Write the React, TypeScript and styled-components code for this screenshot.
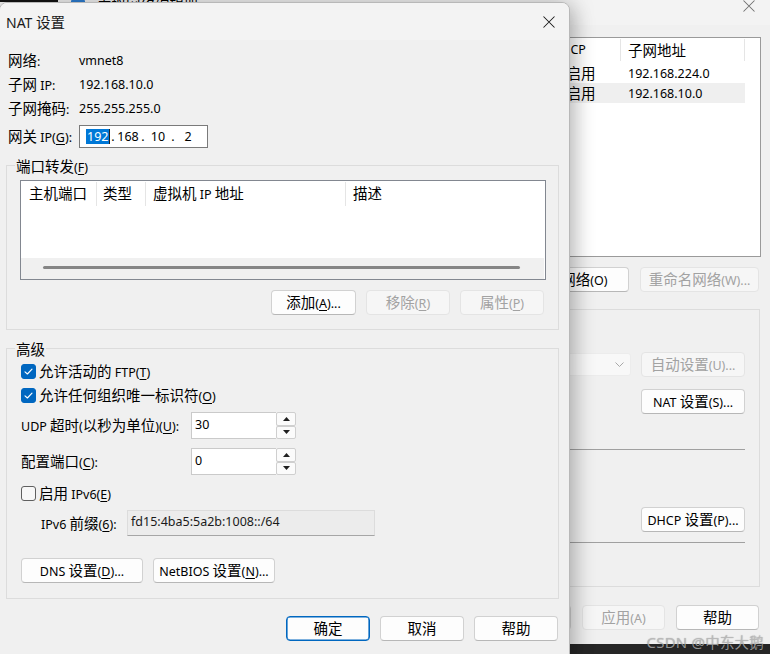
import React from 'react';
import styled, { createGlobalStyle } from 'styled-components';

const GlobalStyle = createGlobalStyle`
  html, body { margin: 0; padding: 0; }
  body {
    width: 770px; height: 654px; overflow: hidden; background: #262626;
    font-family: "Noto Sans", "Noto Sans CJK SC", sans-serif; font-size: 12.5px; line-height: 17px; color: #000;
  }
  #root { width: 770px; height: 654px; }
`;

/* ---------- text helpers ---------- */
const Han = styled.span`
  font-family: "Noto Sans CJK SC", sans-serif;
  font-size: 14.5px;
`;
const Key = styled.span`
  text-decoration: underline;
  text-underline-offset: 2px;
  text-decoration-thickness: 1px;
`;
const HAN_SPLIT = /([\u2e80-\u9fff\uf900-\ufaff\uff00-\uffef\u3000-\u303f]+)/;
const HAN_TEST = /^[\u2e80-\u9fff\uf900-\ufaff\uff00-\uffef\u3000-\u303f]+$/;

function T({ s }: { s: string }) {
  const out: React.ReactNode[] = [];
  s.split(/(&.)/).forEach((seg, i) => {
    if (seg.length === 2 && seg[0] === '&') {
      out.push(<Key key={`k${i}`}>{seg[1]}</Key>);
      return;
    }
    seg.split(HAN_SPLIT).forEach((p, j) => {
      if (!p) return;
      out.push(
        HAN_TEST.test(p) ? <Han key={`${i}-${j}`}>{p}</Han> : <React.Fragment key={`${i}-${j}`}>{p}</React.Fragment>
      );
    });
  });
  return <>{out}</>;
}

/* ---------- icons ---------- */
const CloseIcon = () => (
  <svg width="12" height="12" viewBox="0 0 12 12">
    <path d="M0.5 0.5 L11.5 11.5 M11.5 0.5 L0.5 11.5" stroke="#1a1a1a" strokeWidth="1.05" fill="none" />
  </svg>
);
const CheckMark = () => (
  <svg width="15" height="15" viewBox="0 0 15 15">
    <path d="M4 7.8 L6.4 10 L11 5.2" stroke="#fff" strokeWidth="1.15" fill="none" strokeLinecap="round" strokeLinejoin="round" />
  </svg>
);
const ArrowUp = () => (
  <svg width="7" height="4" viewBox="0 0 7 4">
    <polygon points="3.5,0 7,4 0,4" fill="#1f1f1f" />
  </svg>
);
const ArrowDown = () => (
  <svg width="7" height="4" viewBox="0 0 7 4">
    <polygon points="0,0 7,0 3.5,4" fill="#1f1f1f" />
  </svg>
);
const Chevron = () => (
  <svg width="9" height="5" viewBox="0 0 9 5">
    <polyline points="0.5,0.5 4.5,4.5 8.5,0.5" stroke="#a8a8a8" strokeWidth="1" fill="none" />
  </svg>
);
const NetIcon = () => (
  <svg width="16" height="16" viewBox="0 0 16 16">
    <rect x="1" y="2" width="14" height="9" rx="1" fill="#2d7fd3" />
    <rect x="3" y="4" width="10" height="5" fill="#9fd0ff" />
    <rect x="6" y="12" width="4" height="2" fill="#2d7fd3" />
  </svg>
);

/* ---------- desktop ---------- */
const Desktop = styled.div`
  position: relative;
  width: 770px;
  height: 654px;
  overflow: hidden;
  background: #262626;
`;
const TopStrip = styled.div`
  position: absolute;
  left: 0;
  top: 0;
  width: 58px;
  height: 2px;
  background: #111;
  z-index: 3;
`;
const Watermark = styled.div`
  position: absolute;
  right: 6px;
  bottom: 2px;
  z-index: 5;
  font-family: "Noto Sans", "Noto Sans CJK SC", sans-serif;
  font-size: 15px;
  line-height: 20px;
  color: rgba(190, 190, 190, 0.75);
  text-shadow: 0 0 1px rgba(0, 0, 0, 0.35);
  letter-spacing: 0.2px;
  white-space: nowrap;
`;

/* ---------- buttons ---------- */
const Btn = styled.button<{ $w?: number; $primary?: boolean }>`
  box-sizing: border-box;
  flex: none;
  width: ${(p) => p.$w ?? 84}px;
  height: 25px;
  margin: 0;
  padding: 0;
  font: inherit;
  line-height: 22px;
  text-align: center;
  color: #000;
  background: #fdfdfd;
  border: 1px solid ${(p) => (p.$primary ? '#0067c0' : '#d1d1d1')};
  border-bottom-color: ${(p) => (p.$primary ? '#0067c0' : '#b7b7b7')};
  box-shadow: ${(p) => (p.$primary ? 'inset 0 0 0 0.6px #0067c0' : 'none')};
  border-radius: 4px;
  display: inline-block;
  white-space: nowrap;
  overflow: hidden;
  &:disabled {
    color: #a2a2a2;
    background: #f6f6f6;
    border-color: #e4e4e4;
  }
`;

/* ---------- background window (Virtual Network Editor) ---------- */
const BgWindow = styled.div`
  position: absolute;
  left: 0;
  top: -14px;
  width: 770px;
  height: 658px;
  background: #f0f0f0;
  display: flex;
  flex-direction: column;
  z-index: 1;
`;
const BgTitleBar = styled.div`
  flex: none;
  height: 39px;
  background: #f3f3f3;
  display: flex;
  align-items: center;
  padding-left: 70px;
  gap: 11px;
`;
const BgTitleText = styled.div`
  flex: 1;
  white-space: nowrap;
`;
const BgClose = styled.div`
  width: 42px;
  height: 39px;
  display: flex;
  align-items: center;
  justify-content: center;
  opacity: 0.6;
`;
const BgBody = styled.div`
  flex: 1;
  display: flex;
  flex-direction: column;
  padding: 12px 9px 0 10px;
`;
const NetList = styled.div`
  box-sizing: border-box;
  height: 220px;
  flex: none;
  border: 1px solid #9a9a9a;
  background: #fff;
`;
const NET_COLS = '90px 80px 200px 164px 76px 124px';
const NetHead = styled.div`
  display: grid;
  grid-template-columns: ${NET_COLS};
  width: 734px;
  height: 25px;
`;
const NetHeadCell = styled.div`
  box-sizing: border-box;
  height: 22px;
  margin-top: 1px;
  padding-left: 7px;
  line-height: 22px;
  border-right: 1px solid #e5e5e5;
  white-space: nowrap;
  overflow: hidden;
`;
const NetRow = styled.div<{ $sel?: boolean }>`
  display: grid;
  grid-template-columns: ${NET_COLS};
  width: 734px;
  height: 20px;
  align-items: center;
  background: ${(p) => (p.$sel ? '#efefef' : 'transparent')};
`;
const NetCell = styled.div`
  padding-left: 7px;
  white-space: nowrap;
  overflow: hidden;
`;
const BgButtonRow = styled.div<{ $mt: number }>`
  display: flex;
  justify-content: flex-end;
  gap: 11px;
  margin-top: ${(p) => p.$mt}px;
  padding-right: 2px;
`;
const InfoGroup = styled.div`
  box-sizing: border-box;
  height: 278px;
  margin-top: 17px;
  margin-right: 1px;
  border: 1px solid #dcdcdc;
  display: flex;
  flex-direction: column;
  padding: 0 14px 0 20px;
`;
const ModeRow = styled.div<{ $mt: number }>`
  display: flex;
  justify-content: flex-end;
  align-items: center;
  gap: 10px;
  margin-top: ${(p) => p.$mt}px;
`;
const DisabledSelect = styled.div`
  box-sizing: border-box;
  width: 220px;
  height: 23px;
  background: #f8f8f8;
  border: 1px solid #ececec;
  border-radius: 3px;
  display: flex;
  align-items: center;
  justify-content: flex-end;
  padding-right: 6px;
`;
const Divider = styled.div<{ $mt: number }>`
  height: 1px;
  background: #a0a0a0;
  margin-top: ${(p) => p.$mt}px;
`;

/* ---------- NAT dialog ---------- */
const Dialog = styled.div`
  position: absolute;
  left: -1px;
  top: 2px;
  width: 571px;
  height: 660px;
  box-sizing: border-box;
  background: #f0f0f0;
  border: 1px solid #b8b8b8;
  border-radius: 8px 8px 0 0;
  box-shadow: 0 0 24px rgba(0, 0, 0, 0.26), 6px 8px 20px rgba(0, 0, 0, 0.12);
  display: flex;
  flex-direction: column;
  overflow: hidden;
  z-index: 2;
`;
const TitleBar = styled.div`
  flex: none;
  height: 37px;
  background: #f3f3f3;
  display: flex;
  align-items: center;
  justify-content: space-between;
  padding-left: 6px;
`;
const TitleText = styled.div`
  font-size: 14px;
  color: #1a1a1a;
  white-space: nowrap;
`;
const CloseBtn = styled.div`
  width: 40px;
  height: 37px;
  display: flex;
  align-items: center;
  justify-content: center;
`;
const DialogBody = styled.div`
  flex: 1;
  display: flex;
  flex-direction: column;
  padding: 8px 10px 0 6px;
`;
const InfoRow = styled.div<{ $mt?: number }>`
  display: flex;
  align-items: center;
  height: 24px;
  padding-left: 2px;
  margin-top: ${(p) => p.$mt ?? 0}px;
`;
const InfoLabel = styled.div`
  width: 71px;
  flex: none;
  white-space: nowrap;
`;
const IpBox = styled.div`
  box-sizing: border-box;
  width: 129px;
  height: 23px;
  border: 1px solid #7a7a7a;
  background: #fff;
  display: grid;
  grid-template-columns: 24px 6px 24px 6px 24px 6px 24px;
  align-items: center;
  padding-left: 6px;
`;
const IpField = styled.div`
  text-align: center;
`;
const IpSel = styled.span`
  background: #0078d7;
  color: #fff;
  padding: 0 1px;
  display: inline-block;
  line-height: 15px;
  border-right: 1px solid #222;
`;
const Group = styled.div<{ $mt: number }>`
  position: relative;
  margin-top: ${(p) => p.$mt}px;
  border: 1px solid #dcdcdc;
`;
const GroupLegend = styled.div`
  position: absolute;
  top: -10px;
  left: 8px;
  padding: 0 1px;
  line-height: 20px;
  background: #f0f0f0;
  white-space: nowrap;
`;
const PortBody = styled.div`
  display: flex;
  flex-direction: column;
  padding: 14px 12px 14px 13px;
`;
const ListView = styled.div`
  box-sizing: border-box;
  height: 100px;
  border: 1px solid #828790;
  background: #fff;
  display: flex;
  flex-direction: column;
`;
const ListHead = styled.div`
  display: grid;
  grid-template-columns: 76px 49px 200px 1fr;
  height: 26px;
  flex: none;
`;
const ListHeadCell = styled.div<{ $pl?: number; $last?: boolean }>`
  box-sizing: border-box;
  height: 24px;
  margin-top: 1px;
  padding-left: ${(p) => p.$pl ?? 7}px;
  line-height: 22px;
  border-right: ${(p) => (p.$last ? 'none' : '1px solid #e5e5e5')};
  white-space: nowrap;
`;
const ListEmpty = styled.div`
  flex: 1;
`;
const HScroll = styled.div`
  flex: none;
  height: 21px;
  margin-right: 1px;
  background: #f0f0f0;
  display: flex;
  align-items: center;
  padding: 0 24px 2px 22px;
  box-sizing: border-box;
`;
const HThumb = styled.div`
  flex: 1;
  height: 3px;
  border-radius: 2px;
  background: #858585;
`;
const ButtonRow = styled.div<{ $mt: number; $mr?: number; $justify?: string }>`
  display: flex;
  justify-content: ${(p) => p.$justify ?? 'flex-end'};
  gap: 10px;
  margin-top: ${(p) => p.$mt}px;
  margin-right: ${(p) => p.$mr ?? 0}px;
`;
const AdvBody = styled.div`
  display: flex;
  flex-direction: column;
  padding: 10px 12px 15px 14px;
`;
const CheckRow = styled.div<{ $mt?: number }>`
  display: flex;
  align-items: center;
  gap: 3px;
  height: 24px;
  margin-top: ${(p) => p.$mt ?? 0}px;
`;
const CheckText = styled.span`
  white-space: nowrap;
`;
const CheckBox = styled.div<{ $checked: boolean }>`
  box-sizing: border-box;
  width: 15px;
  height: 15px;
  flex: none;
  border-radius: 3px;
  background: ${(p) => (p.$checked ? '#0067c0' : '#f7f7f7')};
  border: 1px solid ${(p) => (p.$checked ? '#0067c0' : '#5f5f5f')};
  display: flex;
  align-items: center;
  justify-content: center;
  & > svg { margin: -1px; }
`;
const SpinRow = styled.div<{ $mt: number }>`
  display: flex;
  align-items: center;
  margin-top: ${(p) => p.$mt}px;
`;
const SpinLabel = styled.div`
  width: 170px;
  flex: none;
  white-space: nowrap;
`;
const SpinBox = styled.div`
  display: flex;
  width: 105px;
  height: 27px;
  flex: none;
`;
const SpinText = styled.div`
  flex: 1;
  box-sizing: border-box;
  background: #fff;
  border: 1px solid #cacaca;
  border-right: none;
  padding: 3px 3px 0;
`;
const SpinButtons = styled.div`
  width: 20px;
  display: flex;
  flex-direction: column;
`;
const SpinBtn = styled.div`
  flex: 1;
  box-sizing: border-box;
  background: #fbfbfb;
  border: 1px solid #cfcfcf;
  border-radius: 2px;
  display: flex;
  align-items: center;
  justify-content: center;
`;
const PrefixRow = styled.div`
  display: flex;
  align-items: center;
  margin-top: 5px;
  padding-left: 20px;
`;
const PrefixLabel = styled.div`
  width: 86px;
  flex: none;
  white-space: nowrap;
`;
const PrefixInput = styled.div`
  box-sizing: border-box;
  width: 248px;
  height: 26px;
  background: #ececec;
  border: 1px solid #dcdcdc;
  border-bottom-color: #a6a6a6;
  padding: 2px 3px 0;
  color: #1a1a1a;
`;

const NETS = [
  ['VMnet1', '仅主机...', '-', '已连接', '已启用', '192.168.224.0'],
  ['VMnet8', 'NAT 模式', 'NAT 模式', '已连接', '已启用', '192.168.10.0'],
];
const NET_HEAD = ['名称', '类型', '外部连接', '主机连接', 'DHCP', '子网地址'];

function Spin({ value }: { value: string }) {
  return (
    <SpinBox>
      <SpinText>{value}</SpinText>
      <SpinButtons>
        <SpinBtn>
          <ArrowUp />
        </SpinBtn>
        <SpinBtn>
          <ArrowDown />
        </SpinBtn>
      </SpinButtons>
    </SpinBox>
  );
}

export default function App() {
  return (
    <>
      <GlobalStyle />
      <Desktop>
        <BgWindow>
          <BgTitleBar>
            <NetIcon />
            <BgTitleText>
              <T s="虚拟网络编辑器" />
            </BgTitleText>
            <BgClose>
              <CloseIcon />
            </BgClose>
          </BgTitleBar>
          <BgBody>
            <NetList>
              <NetHead>
                {NET_HEAD.map((h) => (
                  <NetHeadCell key={h}>
                    <T s={h} />
                  </NetHeadCell>
                ))}
              </NetHead>
              {NETS.map((row, i) => (
                <NetRow key={row[0]} $sel={i === 1}>
                  {row.map((c, j) => (
                    <NetCell key={j}>
                      <T s={c} />
                    </NetCell>
                  ))}
                </NetRow>
              ))}
            </NetList>
            <BgButtonRow $mt={10}>
              <Btn $w={118}>
                <T s="添加网络(&E)..." />
              </Btn>
              <Btn $w={118}>
                <T s="移除网络(O)" />
              </Btn>
              <Btn $w={119} disabled>
                <T s="重命名网络(W)..." />
              </Btn>
            </BgButtonRow>
            <InfoGroup>
              <ModeRow $mt={42}>
                <DisabledSelect>
                  <Chevron />
                </DisabledSelect>
                <Btn $w={104} disabled>
                  <T s="自动设置(U)..." />
                </Btn>
              </ModeRow>
              <ModeRow $mt={12}>
                <Btn $w={104}>
                  <T s="NAT 设置(S)..." />
                </Btn>
              </ModeRow>
              <Divider $mt={35} />
              <ModeRow $mt={57}>
                <Btn $w={104}>
                  <T s="DHCP 设置(P)..." />
                </Btn>
              </ModeRow>
              <Divider $mt={10} />
            </InfoGroup>
            <BgButtonRow $mt={18}>
              <Btn $w={83}>
                <T s="确定" />
              </Btn>
              <Btn $w={83}>
                <T s="取消" />
              </Btn>
              <Btn $w={83} disabled>
                <T s="应用(A)" />
              </Btn>
              <Btn $w={83}>
                <T s="帮助" />
              </Btn>
            </BgButtonRow>
          </BgBody>
        </BgWindow>

        <TopStrip />

        <Dialog>
          <TitleBar>
            <TitleText>
              <T s="NAT 设置" />
            </TitleText>
            <CloseBtn>
              <CloseIcon />
            </CloseBtn>
          </TitleBar>
          <DialogBody>
            <InfoRow>
              <InfoLabel>
                <T s="网络:" />
              </InfoLabel>
              <span>vmnet8</span>
            </InfoRow>
            <InfoRow>
              <InfoLabel>
                <T s="子网 IP:" />
              </InfoLabel>
              <span>192.168.10.0</span>
            </InfoRow>
            <InfoRow>
              <InfoLabel>
                <T s="子网掩码:" />
              </InfoLabel>
              <span>255.255.255.0</span>
            </InfoRow>
            <InfoRow $mt={4}>
              <InfoLabel>
                <T s="网关 IP(&G):" />
              </InfoLabel>
              <IpBox>
                <IpField>
                  <IpSel>192</IpSel>
                </IpField>
                <IpField>.</IpField>
                <IpField>168</IpField>
                <IpField>.</IpField>
                <IpField>10</IpField>
                <IpField>.</IpField>
                <IpField>2</IpField>
              </IpBox>
            </InfoRow>

            <Group $mt={17}>
              <GroupLegend>
                <T s="端口转发(&F)" />
              </GroupLegend>
              <PortBody>
                <ListView>
                  <ListHead>
                    <ListHeadCell $pl={8}>
                      <T s="主机端口" />
                    </ListHeadCell>
                    <ListHeadCell $pl={6}>
                      <T s="类型" />
                    </ListHeadCell>
                    <ListHeadCell>
                      <T s="虚拟机 IP 地址" />
                    </ListHeadCell>
                    <ListHeadCell $last>
                      <T s="描述" />
                    </ListHeadCell>
                  </ListHead>
                  <ListEmpty />
                  <HScroll>
                    <HThumb />
                  </HScroll>
                </ListView>
                <ButtonRow $mt={10} $mr={2}>
                  <Btn $w={85}>
                    <T s="添加(&A)..." />
                  </Btn>
                  <Btn disabled>
                    <T s="移除(&R)" />
                  </Btn>
                  <Btn disabled>
                    <T s="属性(&P)" />
                  </Btn>
                </ButtonRow>
              </PortBody>
            </Group>

            <Group $mt={18}>
              <GroupLegend>
                <T s="高级" />
              </GroupLegend>
              <AdvBody>
                <CheckRow>
                  <CheckBox $checked>
                    <CheckMark />
                  </CheckBox>
                  <CheckText>
                    <T s="允许活动的 FTP(&T)" />
                  </CheckText>
                </CheckRow>
                <CheckRow>
                  <CheckBox $checked>
                    <CheckMark />
                  </CheckBox>
                  <CheckText>
                    <T s="允许任何组织唯一标识符(&O)" />
                  </CheckText>
                </CheckRow>
                <SpinRow $mt={5}>
                  <SpinLabel>
                    <T s="UDP 超时(以秒为单位)(&U):" />
                  </SpinLabel>
                  <Spin value="30" />
                </SpinRow>
                <SpinRow $mt={9}>
                  <SpinLabel>
                    <T s="配置端口(&C):" />
                  </SpinLabel>
                  <Spin value="0" />
                </SpinRow>
                <CheckRow $mt={6}>
                  <CheckBox $checked={false} />
                  <CheckText>
                    <T s="启用 IPv6(&E)" />
                  </CheckText>
                </CheckRow>
                <PrefixRow>
                  <PrefixLabel>
                    <T s="IPv6 前缀(&6):" />
                  </PrefixLabel>
                  <PrefixInput>fd15:4ba5:5a2b:1008::/64</PrefixInput>
                </PrefixRow>
                <ButtonRow $mt={22} $justify="flex-start">
                  <Btn $w={122}>
                    <T s="DNS 设置(&D)..." />
                  </Btn>
                  <Btn $w={122}>
                    <T s="NetBIOS 设置(&N)..." />
                  </Btn>
                </ButtonRow>
              </AdvBody>
            </Group>

            <ButtonRow $mt={17} $mr={1}>
              <Btn $primary>
                <T s="确定" />
              </Btn>
              <Btn>
                <T s="取消" />
              </Btn>
              <Btn>
                <T s="帮助" />
              </Btn>
            </ButtonRow>
          </DialogBody>
        </Dialog>

        <Watermark>
          <T s="CSDN @中东大鹅" />
        </Watermark>
      </Desktop>
    </>
  );
}
